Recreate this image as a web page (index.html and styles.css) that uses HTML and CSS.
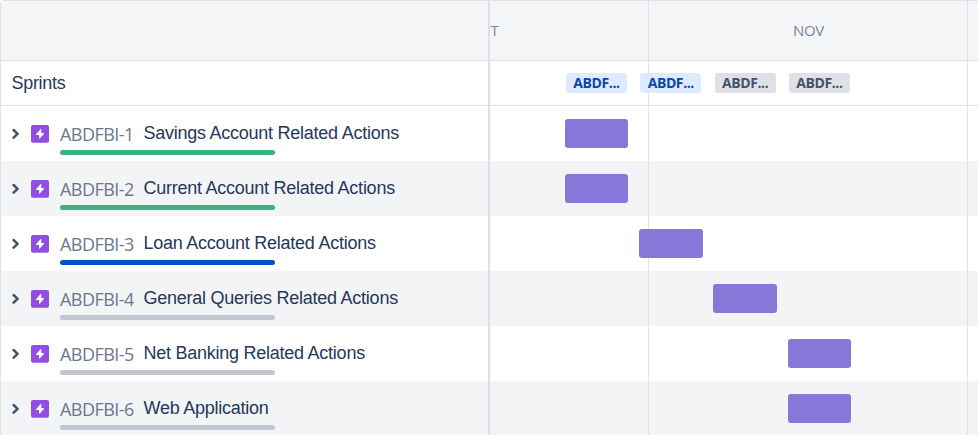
FILE: index.html
```html
<!DOCTYPE html>
<html lang="en">
<head>
<meta charset="utf-8">
<title>Roadmap</title>
<link rel="stylesheet" href="styles.css">
</head>
<body>
<svg width="0" height="0" class="defs">
  <symbol id="chevron" viewBox="0 0 8 12"><path d="M2.6 2 6.6 5.8 2.6 9.6" fill="none" stroke="#42526e" stroke-width="2.5" stroke-linecap="round" stroke-linejoin="round"/></symbol>
  <symbol id="epic" viewBox="0 0 18 18"><rect width="18" height="17.7" rx="2" fill="#904ee2"/><path d="M9.6 4 4.9 9.4Q4.6 10 5.3 10H8.1V13.4Q8.2 14.2 8.8 13.6L12.9 8.9Q13.2 8.1 12.5 8H10.3V4.4Q10.2 3.6 9.6 4Z" fill="#fff"/></symbol>
</svg>
<main class="roadmap">
  <section class="panel">
    <div class="head"></div>
    <div class="sprints">Sprints</div>
    <div class="row"><svg class="chevron"><use href="#chevron"/></svg><svg class="epic"><use href="#epic"/></svg><div class="issue"><div class="label"><span class="key">ABDFBI-1</span><span class="title">Savings Account Related Actions</span></div><div class="progress done"></div></div></div>
    <div class="row"><svg class="chevron"><use href="#chevron"/></svg><svg class="epic"><use href="#epic"/></svg><div class="issue"><div class="label"><span class="key">ABDFBI-2</span><span class="title">Current Account Related Actions</span></div><div class="progress done"></div></div></div>
    <div class="row"><svg class="chevron"><use href="#chevron"/></svg><svg class="epic"><use href="#epic"/></svg><div class="issue"><div class="label"><span class="key">ABDFBI-3</span><span class="title">Loan Account Related Actions</span></div><div class="progress active"></div></div></div>
    <div class="row"><svg class="chevron"><use href="#chevron"/></svg><svg class="epic"><use href="#epic"/></svg><div class="issue"><div class="label"><span class="key">ABDFBI-4</span><span class="title">General Queries Related Actions</span></div><div class="progress"></div></div></div>
    <div class="row"><svg class="chevron"><use href="#chevron"/></svg><svg class="epic"><use href="#epic"/></svg><div class="issue"><div class="label"><span class="key">ABDFBI-5</span><span class="title">Net Banking Related Actions</span></div><div class="progress"></div></div></div>
    <div class="row"><svg class="chevron"><use href="#chevron"/></svg><svg class="epic"><use href="#epic"/></svg><div class="issue"><div class="label"><span class="key">ABDFBI-6</span><span class="title">Web Application</span></div><div class="progress"></div></div></div>
  </section>
  <section class="timeline">
    <div class="head"><div class="month october"><span>OCT</span></div><div class="month november"><span>NOV</span></div></div>
    <div class="sprints"><span class="chip current">ABDF...</span><span class="chip current">ABDF...</span><span class="chip">ABDF...</span><span class="chip">ABDF...</span></div>
    <div class="row"><div class="bar s1"></div></div>
    <div class="row"><div class="bar s1"></div></div>
    <div class="row"><div class="bar s2"></div></div>
    <div class="row"><div class="bar s3"></div></div>
    <div class="row"><div class="bar s4"></div></div>
    <div class="row"><div class="bar s4"></div></div>
  </section>
</main>
</body>
</html>
```
FILE: styles.css
```css
* { box-sizing: border-box; }
body { margin: 0; background: #fff; overflow: hidden; }
.defs { display: block; }
.roadmap {
  display: grid;
  grid-template-columns: 490px 1fr;
  height: 435px;
  overflow: hidden;
  border-radius: 4px 0 0 0;
}
.panel { border-left: 1px solid #dfe1e6; border-right: 2px solid #dfe0e7; border-top-left-radius: 4px; overflow: hidden; }
.timeline { overflow: hidden; }
.head { height: 61px; border-top: 1px solid #dfe1e6; border-bottom: 1px solid #dfe0e6; background-color: #f4f5f7; }
.sprints { height: 45px; border-bottom: 1px solid #dfe0e6; display: flex; align-items: center; }
.row { height: 55px; display: flex; }
.row:nth-child(even) { background-color: #f3f4f6; }
.timeline .head, .timeline .sprints, .timeline .row {
  background-image: linear-gradient(#e2e3e8, #e2e3e8), linear-gradient(#dfe1e6, #dfe1e6);
  background-size: 1.4px 100%, 1px 100%;
  background-position: 158px 0, 477px 0;
  background-repeat: no-repeat;
}
.panel .sprints { padding-left: 10.5px; font: 18px "Liberation Sans", Arial, sans-serif; letter-spacing: -.3px; color: #253858; }
.panel .row { padding-left: 10px; }
.chevron { width: 8px; height: 12px; margin-top: 22px; flex: none; }
.epic { width: 18px; height: 18px; margin: 19px 0 0 12px; flex: none; }
.issue { margin-left: 11px; padding-top: 14px; }
.label { display: flex; height: 30px; white-space: nowrap; }
.key { width: 83.5px; padding-top: 2px; font: 400 18px/24px "Open Sans", "Segoe UI", sans-serif; font-weight: 370; color: #6b778c; letter-spacing: -.55px; }
.title { font: 18px/26px "Liberation Sans", Arial, sans-serif; letter-spacing: -.25px; color: #253858; }
.progress { width: 215px; height: 5px; border-radius: 2.5px; background: #c1c7d0; }
.progress.done { background: #36b37e; }
.progress.active { background: #0052cc; }
.timeline .head { display: flex; }
.month { display: flex; justify-content: center; align-items: center; font: 400 15px "Open Sans", "Segoe UI", sans-serif; color: #7a869a; letter-spacing: -.3px; padding-bottom: 1px; }
.october { width: 158px; justify-content: flex-start; overflow: hidden; }
.october span { margin-left: -20px; }
.november { width: 319px; padding-left: 2px; }
.timeline .sprints { padding-left: 76px; gap: 13.3px; }
.chip { width: 61px; height: 20px; border-radius: 3px; background: #dfe1e6; color: #42526e; font: 700 14px/20px "Open Sans", sans-serif; letter-spacing: -.4px; text-align: center; }
.chip.current { background: #deebff; color: #0747a6; }
.bar { width: 63.5px; height: 29.6px; margin-top: 12.7px; border-radius: 3px; background: #8777d9; }
.s1 { margin-left: 74.5px; }
.s2 { margin-left: 149px; }
.s3 { margin-left: 223.3px; }
.s4 { margin-left: 297.7px; }
```
